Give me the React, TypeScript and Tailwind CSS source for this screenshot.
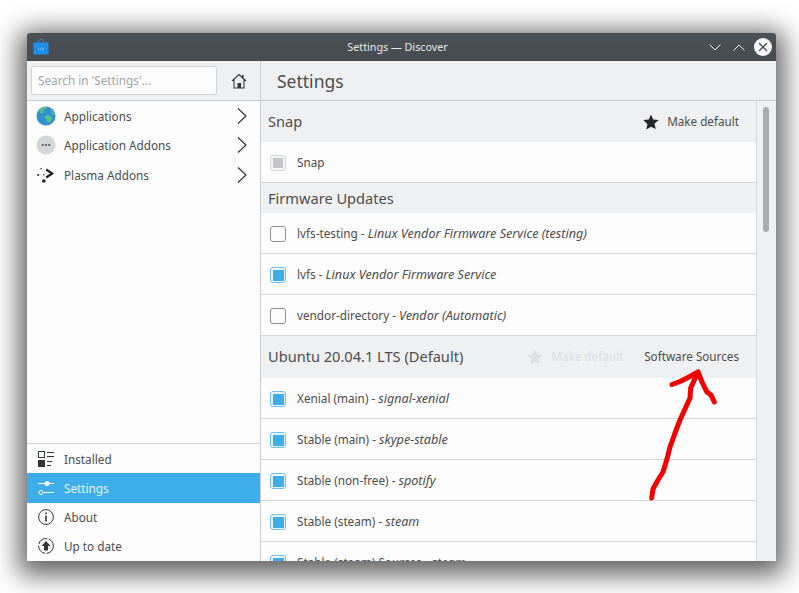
import React from "react";

function Check({ state }: { state: "on" | "off" | "disabled" }) {
  if (state === "on")
    return (
      <span className="flex h-[16px] w-[16px] shrink-0 items-center justify-center rounded-[3px] border border-[#6fc2ee] bg-[#eaf6fc]">
        <span className="h-[11px] w-[11px] bg-[#3daee9]" />
      </span>
    );
  if (state === "disabled")
    return (
      <span className="flex h-[16px] w-[16px] shrink-0 items-center justify-center rounded-[3px] border border-[#d5d7d9] bg-[#f4f5f5]">
        <span className="h-[10px] w-[10px] bg-[#c4c5c7]" />
      </span>
    );
  return <span className="h-[16px] w-[16px] shrink-0 rounded-[3px] border border-[#8e9194] bg-[#fcfcfc]" />;
}

function Row({ state, name, sub }: { state: "on" | "off" | "disabled"; name: string; sub?: string }) {
  return (
    <div className="flex h-[41px] shrink-0 items-center gap-[11px] border-b border-[#d6d8da] bg-[#fcfcfc] pl-[9px] pt-[2px] text-[11.75px] text-[#4d4d4d]">
      <Check state={state} />
      <span className="whitespace-nowrap">
        {name}
        {sub && (
          <>
            {" - "}
            <i className="text-[12.6px]">{sub}</i>
          </>
        )}
      </span>
    </div>
  );
}

function Star({ className }: { className: string }) {
  return (
    <svg viewBox="0 0 16 16" className={`h-[16px] w-[16px] ${className}`}>
      <path fill="currentColor" d="M8 .5l2.2 5.1 5.5.5-4.2 3.6 1.3 5.4L8 12.7l-4.8 2.9 1.3-5.4L.3 6.1l5.5-.5z" />
    </svg>
  );
}

function Chevron() {
  return (
    <svg viewBox="0 0 12 18" className="h-[18px] w-[12px] text-[#31363b]">
      <path d="M2 1.5L10 9l-8 7.5" fill="none" stroke="currentColor" strokeWidth="1.2" />
    </svg>
  );
}

function NavItem({ icon, label }: { icon: React.ReactNode; label: string }) {
  return (
    <div className="flex h-[29.5px] shrink-0 items-center pl-[8px] pr-[12px] text-[11.75px] text-[#4d4d4d]">
      <span className="flex w-[21px] justify-center">{icon}</span>
      <span className="ml-[8px] flex-1 pt-[1.5px]">{label}</span>
      <Chevron />
    </div>
  );
}

function BottomItem({ icon, label, active }: { icon: React.ReactNode; label: string; active?: boolean }) {
  return (
    <div className={`flex h-[29.25px] shrink-0 items-center pl-[8px] text-[11.75px] ${active ? "bg-[#3daee9] text-[#e4f3fb]" : "text-[#4d4d4d]"}`}>
      <span className="flex w-[21px] justify-center">{icon}</span>
      <span className="ml-[8px] pt-[1.5px]">{label}</span>
    </div>
  );
}

export default function App() {
  return (
    <div className="relative h-[593px] w-[799px] overflow-hidden bg-white pl-[27px] pt-[33px]">
      <div className="flex h-[528px] w-[749px] flex-col overflow-hidden rounded-t-[3px] bg-[#eff0f1] font-['Noto_Sans',sans-serif] shadow-[0_6px_26px_8px_rgba(0,0,0,0.62)]">
        {/* Title bar */}
        <div className="flex h-[28px] shrink-0 items-center bg-[linear-gradient(#4a5157,#464c52)] pl-[6px] pr-[4px] text-[#eff0f1]">
          <svg viewBox="0 0 16 16" className="h-[16px] w-[16px]">
            <path d="M5.500 4V2.500a2.500 2 0 0 1 5 0V4" fill="none" stroke="#2a86d8" strokeWidth="1" />
            <rect x="0.5" y="3.5" width="15" height="12" rx="1" fill="#1d8fe8" />
            <path d="M5 10h1M7 10h1M9 8.500l1.500 1.500L9 11.500" stroke="#bfe3fb" strokeWidth="0.8" fill="none" />
          </svg>
          <span className="flex-1 pl-[37px] text-center text-[10.75px] text-[#e6e8e9]">Settings — Discover</span>
          <svg viewBox="0 0 12 7" className="h-[7px] w-[12px]">
            <path d="M.5.5L6 6 11.5.5" fill="none" stroke="#eff0f1" strokeWidth="1" />
          </svg>
          <svg viewBox="0 0 12 7" className="ml-[12px] h-[7px] w-[12px]">
            <path d="M.5 6.500L6 1l5.500 5.500" fill="none" stroke="#eff0f1" strokeWidth="1" />
          </svg>
          <svg viewBox="0 0 18 18" className="ml-[9px] h-[18px] w-[18px]">
            <circle cx="9" cy="9" r="9" fill="#fcfcfc" />
            <path d="M5 5l8 8M13 5l-8 8" stroke="#4a5157" strokeWidth="1.4" />
          </svg>
        </div>

        <div className="flex min-h-0 flex-1">
          {/* Sidebar */}
          <div className="flex w-[234px] shrink-0 flex-col border-r border-[#c9cbcd]">
            <div className="flex h-[40px] shrink-0 items-center border-b border-[#c9cbcd] pl-[4px]">
              <div className="flex h-[29px] w-[186px] items-center rounded-[3px] border border-[#cfd1d3] bg-[#fcfcfc] pl-[6px] pt-[1px] text-[11.75px] text-[#a3a5a7]">
                Search in 'Settings'...
              </div>
              <svg viewBox="0 0 16 16" className="ml-[14px] h-[16px] w-[16px]">
                <path d="M1 8l7-6.500L15 8M3 6.500v8.500h10V6.500" fill="none" stroke="#31363b" strokeWidth="1.1" />
                <rect x="6.5" y="10" width="3.5" height="5" fill="#31363b" />
                <rect x="11" y="2" width="1.5" height="3" fill="#31363b" />
              </svg>
            </div>
            <div className="flex min-h-0 flex-1 flex-col bg-[#fcfcfc]">
              <NavItem
                label="Applications"
                icon={
                  <svg viewBox="0 0 20 20" className="h-[20px] w-[20px]">
                    <circle cx="10" cy="10" r="9.5" fill="#2f8fd0" />
                    <path d="M3 5c2-3 5-4.500 8-4.500 0 2-2 2.500-3 3.500s1 2-1 3-3 0-4-2zM9 10c2-1 5-1 7 1 1 2-1 5-4 6-1-2-1-3-2-4s-2-2-1-3zM14 3c2 1 4 3 5 6-2 0-4-1-4-3s-2-2-1-3z" fill="#5fbd8a" />
                  </svg>
                }
              />
              <NavItem
                label="Application Addons"
                icon={
                  <svg viewBox="0 0 20 20" className="h-[20px] w-[20px]">
                    <circle cx="10" cy="10" r="9.5" fill="#d3d6d8" />
                    <circle cx="6.8" cy="10" r="1.1" fill="#4a4f54" />
                    <circle cx="10" cy="10" r="1.1" fill="#4a4f54" />
                    <circle cx="13.2" cy="10" r="1.1" fill="#4a4f54" />
                  </svg>
                }
              />
              <NavItem
                label="Plasma Addons"
                icon={
                  <svg viewBox="0 0 20 20" className="h-[20px] w-[20px]">
                    <path d="M10.200 4.500l6 4-6 4" fill="none" stroke="#1f2326" strokeWidth="2.200" />
                    <circle cx="5.200" cy="3.700" r="0.8" fill="#1f2326" />
                    <circle cx="2.200" cy="10" r="1" fill="#1f2326" />
                    <circle cx="7.800" cy="9.700" r="0.8" fill="#1f2326" />
                    <circle cx="7.800" cy="16" r="1.800" fill="#1f2326" />
                  </svg>
                }
              />
              <div className="flex-1" />
              <div className="h-px shrink-0 bg-[#d0d2d4]" />
              <BottomItem
                label="Installed"
                icon={
                  <svg viewBox="0 0 16 16" className="h-[16px] w-[16px] text-[#31363b]">
                    <rect x=".5" y=".5" width="6" height="6" fill="none" stroke="currentColor" />
                    <rect x="0" y="9" width="7" height="7" fill="currentColor" />
                    <path d="M9 1.500h7M9 5.500h7M9 10.500h5M9 14.500h4" stroke="currentColor" />
                  </svg>
                }
              />
              <BottomItem
                active
                label="Settings"
                icon={
                  <svg viewBox="0 0 16 16" className="h-[16px] w-[16px] text-[#fcfcfc]">
                    <path d="M0 3.500h16M5 12.500h11M0 12.500h1" stroke="currentColor" />
                    <circle cx="9" cy="3.5" r="2.5" fill="currentColor" />
                    <circle cx="3" cy="12.5" r="2" fill="none" stroke="currentColor" />
                  </svg>
                }
              />
              <BottomItem
                label="About"
                icon={
                  <svg viewBox="0 0 16 16" className="h-[16px] w-[16px] text-[#31363b]">
                    <circle cx="8" cy="8" r="7.4" fill="none" stroke="currentColor" />
                    <rect x="7.2" y="6.5" width="1.6" height="6" fill="currentColor" />
                    <rect x="7.2" y="3.5" width="1.6" height="1.7" fill="currentColor" />
                  </svg>
                }
              />
              <BottomItem
                label="Up to date"
                icon={
                  <svg viewBox="0 0 16 16" className="h-[16px] w-[16px] text-[#31363b]">
                    <circle cx="8" cy="8" r="7.4" fill="none" stroke="currentColor" strokeDasharray="11 1.5" />
                    <path d="M8 3l4.500 5H10v4.500H6V8H3.500z" fill="currentColor" />
                  </svg>
                }
              />
            </div>
          </div>

          {/* Main */}
          <div className="flex min-w-0 flex-1 flex-col">
            <div className="flex h-[40px] shrink-0 items-center border-b border-[#c9cbcd] pl-[16px] pt-[2px] text-[17.5px] text-[#4d4d4d]">Settings</div>
            <div className="flex min-h-0 flex-1">
              <div className="flex min-w-0 flex-1 flex-col overflow-hidden">
                <div className="flex h-[41px] shrink-0 items-center pl-[7px] pr-[17px] pt-[1px] text-[14.6px] text-[#4d4d4d]">
                  <span className="flex-1">Snap</span>
                  <Star className="text-[#232629]" />
                  <span className="ml-[8px] text-[11.7px]">Make default</span>
                </div>
                <Row state="disabled" name="Snap" />
                <div className="flex h-[30px] shrink-0 items-center pl-[7px] pt-[2px] text-[14.6px] text-[#4d4d4d]">Firmware Updates</div>
                <Row state="off" name="lvfs-testing" sub="Linux Vendor Firmware Service (testing)" />
                <Row state="on" name="lvfs" sub="Linux Vendor Firmware Service" />
                <Row state="off" name="vendor-directory" sub="Vendor (Automatic)" />
                <div className="flex h-[42px] shrink-0 items-center pl-[7px] pr-[17px] text-[14.6px] text-[#4d4d4d]">
                  <span className="flex-1">Ubuntu 20.04.1 LTS (Default)</span>
                  <Star className="text-[#dcdee0]" />
                  <span className="ml-[8px] text-[11.7px] text-[#dcdee0]">Make default</span>
                  <span className="ml-[21px] text-[11.7px]">Software Sources</span>
                </div>
                <Row state="on" name="Xenial (main)" sub="signal-xenial" />
                <Row state="on" name="Stable (main)" sub="skype-stable" />
                <Row state="on" name="Stable (non-free)" sub="spotify" />
                <Row state="on" name="Stable (steam)" sub="steam" />
                <Row state="on" name="Stable (steam) Sources" sub="steam" />
              </div>
              <div className="w-[20px] shrink-0 border-l border-[#d6d8da] pl-[6px] pt-[6px]">
                <div className="h-[125px] w-[6px] rounded-[3px] bg-[#a9abad]" />
              </div>
            </div>
          </div>
        </div>
      </div>

      {/* Red hand-drawn annotation */}
      <svg viewBox="0 0 799 593" className="pointer-events-none absolute left-0 top-0 h-[593px] w-[799px]">
        <path
          d="M651.700 498L653 489L658 480L663 472L667 459L670 447L675 433L680 420L685 409L690 398L690.700 388L698 372M672 384.500L680 381.500L689 377L698 372M698 372L702 382L706.700 391.700L711 395L714.300 402"
          fill="none"
          stroke="#f50000"
          strokeWidth="5"
          strokeLinecap="round"
          strokeLinejoin="round"
        />
      </svg>
    </div>
  );
}
